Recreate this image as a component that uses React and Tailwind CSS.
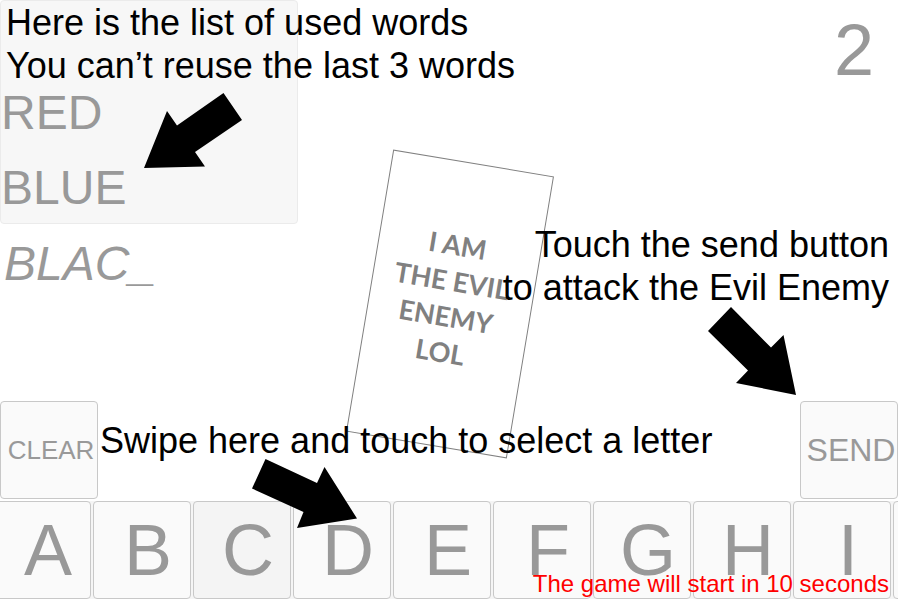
const USED_WORDS = ['RED', 'BLUE'];
const LETTERS = ['A', 'B', 'C', 'D', 'E', 'F', 'G', 'H', 'I', 'J'];

function UsedWords() {
  return (
    <ul className="flex h-56 w-[298px] flex-col rounded border border-[#ebebeb] bg-[#f7f7f7] pt-[74px] text-5xl leading-[75px]">
      {USED_WORDS.map((word) => (
        <li key={word} className="h-[75px]">{word}</li>
      ))}
    </ul>
  );
}

function ActionButton({ label, size }) {
  return (
    <button
      type="button"
      className={`flex h-[98px] w-[98px] items-center justify-center rounded border border-[#c8c8c8] bg-[#fafafa] pl-1 ${size}`}
    >
      {label}
    </button>
  );
}

function LetterStrip({ active }) {
  return (
    <div className="overflow-hidden bg-[#f5f5f5]">
      <div className="-ml-[7px] flex gap-0.5">
        {LETTERS.map((letter) => (
          <button
            key={letter}
            type="button"
            className={`flex h-[98px] w-[98px] shrink-0 items-center justify-center rounded border border-[#c8c8c8] pl-3 text-7xl ${
              letter === active ? 'bg-[#f4f4f4]' : 'bg-[#fafafa]'
            }`}
          >
            {letter}
          </button>
        ))}
      </div>
    </div>
  );
}

function EnemyCard() {
  return (
    <div className="absolute top-[161px] left-1/2 flex h-[286px] w-[163px] -translate-x-1/2 rotate-[9.5deg] flex-col items-center justify-center border border-[#808080] pr-1 pb-2.5 text-center font-['Lato',sans-serif] text-[27px] leading-9 font-bold whitespace-nowrap text-[#808080]">
      <span>I AM</span>
      <span>THE EVIL</span>
      <span>ENEMY</span>
      <span>LOL</span>
    </div>
  );
}

function TutorialOverlay() {
  return (
    <div className="pointer-events-none absolute inset-0 text-4xl leading-[43px] whitespace-nowrap text-black">
      <p className="absolute top-px left-1.5">
        Here is the list of used words
        <br />
        You can’t reuse the last 3 words
      </p>
      <svg className="absolute top-[93px] left-36" width="98" height="75" viewBox="0 0 98 75" aria-hidden="true">
        <polygon points="0,75 23,18 33,32.5 79.5,0 98,27 51,59 61,73.5" />
      </svg>

      <p className="absolute top-[223px] right-[11px] text-right">
        Touch the send button
        <br />
        to attack the Evil Enemy
      </p>
      <svg className="absolute top-[307px] right-[104px]" width="88" height="88" viewBox="0 0 88 88" aria-hidden="true">
        <polygon points="88,88 75.5,28 63,40.5 23,0 0,24 40,63.5 28,76" />
      </svg>

      <p className="absolute bottom-[138px] left-[100px]">Swipe here and touch to select a letter</p>
      <svg className="absolute bottom-[72px] left-[252px]" width="105" height="69" viewBox="0 0 105 69" aria-hidden="true">
        <polygon points="105,59.5 72.5,8 65,24 13.5,0 0,29.5 51.5,53 45,69" />
      </svg>

      <p className="absolute right-[11px] bottom-0 text-2xl leading-8 text-[#ff0000]">The game will start in 10 seconds</p>
    </div>
  );
}

export default function App() {
  return (
    <main className="relative flex h-screen flex-col overflow-hidden bg-white pr-0.5 pb-px font-['Liberation_Sans',Arial,sans-serif] text-[#999999]">
      <header className="flex items-start justify-between">
        <UsedWords />
        <div className="pt-3.5 pr-6 text-7xl leading-[72px]">2</div>
      </header>

      <output className="pt-2.5 pl-1 text-5xl leading-[60px] italic">BLAC_</output>

      <EnemyCard />

      <div className="mt-auto flex justify-between pb-0.5">
        <ActionButton label="CLEAR" size="text-[26px]" />
        <ActionButton label="SEND" size="text-[32px]" />
      </div>
      <LetterStrip active="C" />

      <TutorialOverlay />
    </main>
  );
}
